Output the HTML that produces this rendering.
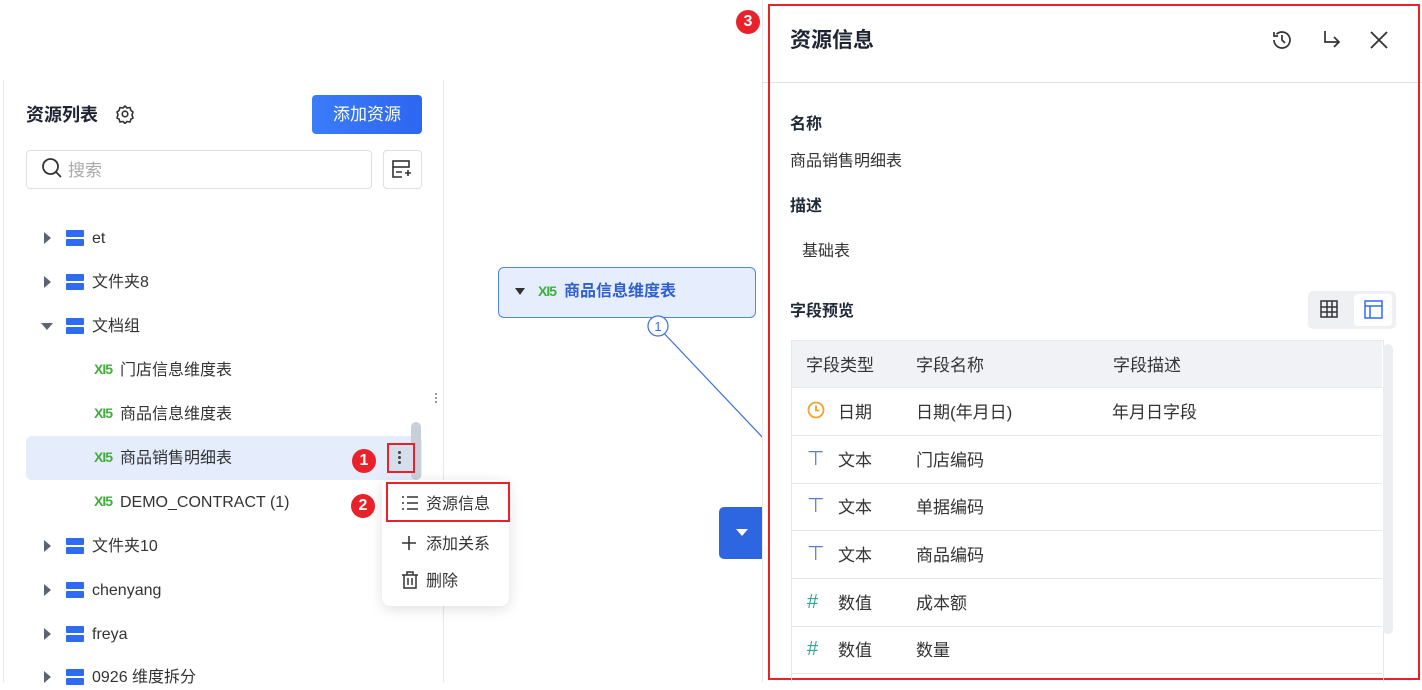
<!DOCTYPE html>
<html><head><meta charset="utf-8"><style>
*{margin:0;padding:0;box-sizing:border-box}
body{width:1422px;height:682px;position:relative;overflow:hidden;background:#fff;font-family:"Liberation Sans","Noto Sans CJK SC",sans-serif;color:#1f2937;font-size:16px;line-height:1.25}
.a{position:absolute}
.t{color:#333;font-size:16px;white-space:nowrap;line-height:24px;padding-top:2px}
.db{position:absolute;width:18px;height:16px}
.db:before,.db:after{content:"";position:absolute;left:0;width:18px;height:7px;background:#2f6bf0;border-radius:1px}
.db:before{top:0}.db:after{top:9px}
.tri{position:absolute;width:0;height:0;border-top:6px solid transparent;border-bottom:6px solid transparent;border-left:7px solid #5b6474}
.xls{position:absolute;color:#3fae3a;font-size:14px;font-weight:bold;letter-spacing:-1px;line-height:17px}
.badge{position:absolute;width:24px;height:24px;border-radius:50%;background:#e8212b;color:#fff;font-weight:bold;font-size:16px;text-align:center;line-height:24px}
.row{position:absolute;left:792px;width:590px;height:48px;border-bottom:1px solid #e4e7ec}
.row span{position:absolute;top:14px;font-size:17px;color:#333;line-height:22px}
.row span.ic{font-size:20px;top:12px}
</style></head><body>
<div class="a" style="left:3px;top:80px;width:1px;height:602px;background:#e8e8ec"></div>
<div class="a" style="left:443px;top:80px;width:1px;height:602px;background:#e8e8ec"></div>
<div class="a" style="left:26px;top:103px;font-size:18px;font-weight:bold;color:#1f2433;line-height:24px">资源列表</div>
<svg class="a" style="left:115px;top:104px" width="20" height="20" viewBox="0 0 20 20" fill="none" stroke="#333" stroke-width="1.6"><path d="M10 2l2 2 3-.5 1 3 2 1.5-1 3 1 3-2 1-1 3-3-.5-2 2-2-2-3 .5-1-3-2-1 1-3-1-3 2-1.5 1-3 3 .5z"/><circle cx="10" cy="10" r="2.8"/></svg>
<div class="a" style="left:312px;top:95px;width:110px;height:39px;border-radius:4px;background:linear-gradient(90deg,#3b7cf8,#2d66f0);color:#fff;font-size:17px;text-align:center;line-height:40px">添加资源</div>
<div class="a" style="left:26px;top:150px;width:346px;height:39px;border:1px solid #dcdfe6;border-radius:4px"></div>
<svg class="a" style="left:41px;top:157px" width="22" height="22" viewBox="0 0 22 22" fill="none" stroke="#333" stroke-width="1.8"><circle cx="9.5" cy="9.5" r="7.5"/><path d="M15 15l5 5"/></svg>
<div class="a" style="left:68px;top:160px;color:#aaa;font-size:17px;line-height:22px">搜索</div>
<div class="a" style="left:383px;top:150px;width:39px;height:39px;border:1px solid #dcdfe6;border-radius:4px"></div>
<svg class="a" style="left:392px;top:160px" width="20" height="19" viewBox="0 0 20 19" fill="none" stroke="#333" stroke-width="1.6"><rect x="1" y="1" width="16" height="6"/><path d="M1 7v10h9M4 12h6M13 13h6M16 10v6"/></svg>

<div class="tri" style="left:44px;top:232px"></div><div class="db" style="left:66px;top:230px"></div><div class="a t" style="left:92px;top:225px">et</div>
<div class="tri" style="left:44px;top:276px"></div><div class="db" style="left:66px;top:274px"></div><div class="a t" style="left:92px;top:269px">文件夹8</div>
<div class="a" style="left:41px;top:323px;border-left:6px solid transparent;border-right:6px solid transparent;border-top:7px solid #5b6474"></div><div class="db" style="left:66px;top:318px"></div><div class="a t" style="left:92px;top:313px">文档组</div>
<div class="xls" style="left:94px;top:361px">XI5</div><div class="a t" style="left:120px;top:357px">门店信息维度表</div>
<div class="xls" style="left:94px;top:405px">XI5</div><div class="a t" style="left:120px;top:401px">商品信息维度表</div>
<div class="a" style="left:26px;top:436px;width:396px;height:44px;background:#e5edfd;border-radius:6px"></div>
<div class="a" style="left:411px;top:422px;width:10px;height:58px;background:#c9cfd9;border-radius:5px"></div>
<div class="xls" style="left:94px;top:449px">XI5</div><div class="a t" style="left:120px;top:445px">商品销售明细表</div>
<div class="badge" style="left:352px;top:449px">1</div>
<div class="a" style="left:387px;top:443px;width:28px;height:30px;border:2px solid #e8212b;background:#d6deeb"></div>
<div class="a" style="left:398px;top:451px;width:3px;height:3px;background:#444;border-radius:50%;box-shadow:0 5px 0 #444,0 10px 0 #444"></div>
<div class="xls" style="left:94px;top:493px">XI5</div><div class="a t" style="left:120px;top:489px">DEMO_CONTRACT (1)</div>
<div class="tri" style="left:44px;top:540px"></div><div class="db" style="left:66px;top:538px"></div><div class="a t" style="left:92px;top:533px">文件夹10</div>
<div class="tri" style="left:44px;top:584px"></div><div class="db" style="left:66px;top:582px"></div><div class="a t" style="left:92px;top:577px">chenyang</div>
<div class="tri" style="left:44px;top:628px"></div><div class="db" style="left:66px;top:626px"></div><div class="a t" style="left:92px;top:621px">freya</div>
<div class="tri" style="left:44px;top:671px"></div><div class="db" style="left:66px;top:669px"></div><div class="a t" style="left:92px;top:664px">0926 维度拆分</div>
<div class="a" style="left:382px;top:480px;width:127px;height:126px;background:#fff;border-radius:8px;box-shadow:0 3px 14px rgba(0,0,0,.13)"></div>
<div class="badge" style="left:351px;top:494px">2</div>
<div class="a" style="left:386px;top:482px;width:124px;height:40px;border:2px solid #e8212b"></div>
<svg class="a" style="left:401px;top:495px" width="18" height="16" viewBox="0 0 18 16" stroke="#333" stroke-width="1.6"><path d="M1 2h2M6 2h11M1 8h2M6 8h11M1 14h2M6 14h11"/></svg>
<div class="a t" style="left:426px;top:491px">资源信息</div>
<svg class="a" style="left:402px;top:536px" width="14" height="14" stroke="#333" stroke-width="1.6"><path d="M7 0v14M0 7h14"/></svg>
<div class="a t" style="left:426px;top:531px">添加关系</div>
<svg class="a" style="left:401px;top:571px" width="18" height="18" viewBox="0 0 18 18" fill="none" stroke="#333" stroke-width="1.5"><path d="M1 4h16M6 4V1h6v3M3 4v13h12V4M7 7v7M11 7v7"/></svg>
<div class="a t" style="left:426px;top:568px">删除</div>
<div class="a" style="left:498px;top:267px;width:258px;height:51px;border:1px solid #4f86ec;border-radius:6px;background:#e6eefd"></div>
<div class="a" style="left:515px;top:288px;border-left:5px solid transparent;border-right:5px solid transparent;border-top:7px solid #333"></div>
<div class="xls" style="left:538px;top:283px">XI5</div>
<div class="a" style="left:564px;top:282px;font-size:16px;font-weight:bold;color:#2f5fd0;line-height:20px">商品信息维度表</div>
<svg class="a" style="left:640px;top:312px" width="130" height="130"><line x1="20" y1="17" x2="125" y2="128" stroke="#3a6ee8" stroke-width="1.2"/><circle cx="18" cy="14" r="10" fill="#fff" stroke="#3a6ee8" stroke-width="1.2"/><text x="18" y="19" font-size="13" text-anchor="middle" fill="#3a6ee8" font-family="Liberation Sans">1</text></svg>
<div class="a" style="left:719px;top:507px;width:50px;height:52px;background:#2d66e0;border-radius:5px 0 0 5px"></div>
<div class="a" style="left:736px;top:529px;border-left:6px solid transparent;border-right:6px solid transparent;border-top:7px solid #fff"></div>
<div class="a" style="left:435px;top:393px;width:2px;height:2px;background:#999;box-shadow:0 4px 0 #999,0 8px 0 #999"></div>
<div class="a" style="left:762px;top:0;width:660px;height:682px;background:#fff;border-left:1px solid #e6e8ec"></div>
<div class="a" style="left:762px;top:82px;width:660px;height:1px;background:#dde1e7"></div>
<div class="a" style="left:768px;top:4px;width:652px;height:676px;border:2px solid #e8212b"></div>
<div class="badge" style="left:736px;top:10px">3</div>
<div class="a" style="left:790px;top:27px;font-size:21px;font-weight:bold;color:#1f2433;line-height:28px">资源信息</div>
<svg class="a" style="left:1271px;top:29px" width="22" height="22" viewBox="0 0 22 22" fill="none" stroke="#333" stroke-width="1.7"><path d="M3 11a8 8 0 1 0 2.5-5.8M3 3v4h4M11 6v5l3 3"/></svg>
<svg class="a" style="left:1322px;top:30px" width="20" height="20" viewBox="0 0 20 20" fill="none" stroke="#333" stroke-width="1.7"><path d="M3 1v11h14M12 7l5 5-5 5"/></svg>
<svg class="a" style="left:1370px;top:31px" width="18" height="18" stroke="#333" stroke-width="1.8"><path d="M1 1l16 16M17 1L1 17"/></svg>
<div class="a" style="left:790px;top:115px;font-size:16px;font-weight:bold;line-height:20px">名称</div>
<div class="a t" style="left:790px;top:148px">商品销售明细表</div>
<div class="a" style="left:790px;top:197px;font-size:16px;font-weight:bold;line-height:20px">描述</div>
<div class="a t" style="left:802px;top:238px">基础表</div>
<div class="a" style="left:790px;top:302px;font-size:16px;font-weight:bold;line-height:20px">字段预览</div>
<div class="a" style="left:1308px;top:291px;width:88px;height:38px;background:#eef0f4;border-radius:5px"></div>
<svg class="a" style="left:1320px;top:300px" width="18" height="18" fill="none" stroke="#333" stroke-width="1.5"><rect x="1" y="1" width="16" height="16"/><path d="M1 7h16M1 12h16M7 1v16M12 1v16"/></svg>
<div class="a" style="left:1354px;top:294px;width:38px;height:32px;background:#fff;border-radius:4px"></div>
<svg class="a" style="left:1364px;top:300px" width="19" height="19" fill="none" stroke="#2f6bf0" stroke-width="1.5"><rect x="1" y="1" width="17" height="17"/><path d="M1 6h17M6 6v12"/></svg>
<div class="a" style="left:791px;top:340px;width:593px;height:342px;border:1px solid #e4e7ec;border-bottom:none"></div>
<div class="a" style="left:792px;top:341px;width:590px;height:47px;background:#f0f2f5;border-bottom:1px solid #e4e7ec"></div>
<div class="a t" style="left:806px;top:352px;font-size:17px">字段类型</div>
<div class="a t" style="left:916px;top:352px;font-size:17px">字段名称</div>
<div class="a t" style="left:1113px;top:352px;font-size:17px">字段描述</div>
<div class="a" style="left:1383px;top:344px;width:10px;height:290px;background:#eceef2;border-radius:5px"></div>
<div class="row" style="top:388px"><svg style="position:absolute;left:15px;top:13px" width="18" height="18" fill="none" stroke="#f0a42a" stroke-width="1.8"><circle cx="9" cy="9" r="7.5"/><path d="M9 4.5v5h3.5"/></svg><span style="left:46px">日期</span><span style="left:124px">日期(年月日)</span><span style="left:320px">年月日字段</span></div>
<div class="row" style="top:436px"><span class="ic" style="left:15px;color:#5b7bd0">⊤</span><span style="left:46px">文本</span><span style="left:124px">门店编码</span></div>
<div class="row" style="top:483px"><span class="ic" style="left:15px;color:#5b7bd0">⊤</span><span style="left:46px">文本</span><span style="left:124px">单据编码</span></div>
<div class="row" style="top:531px"><span class="ic" style="left:15px;color:#5b7bd0">⊤</span><span style="left:46px">文本</span><span style="left:124px">商品编码</span></div>
<div class="row" style="top:579px"><span class="ic" style="left:15px;color:#2fa59a">#</span><span style="left:46px">数值</span><span style="left:124px">成本额</span></div>
<div class="row" style="top:626px"><span class="ic" style="left:15px;color:#2fa59a">#</span><span style="left:46px">数值</span><span style="left:124px">数量</span></div>
</body></html>
